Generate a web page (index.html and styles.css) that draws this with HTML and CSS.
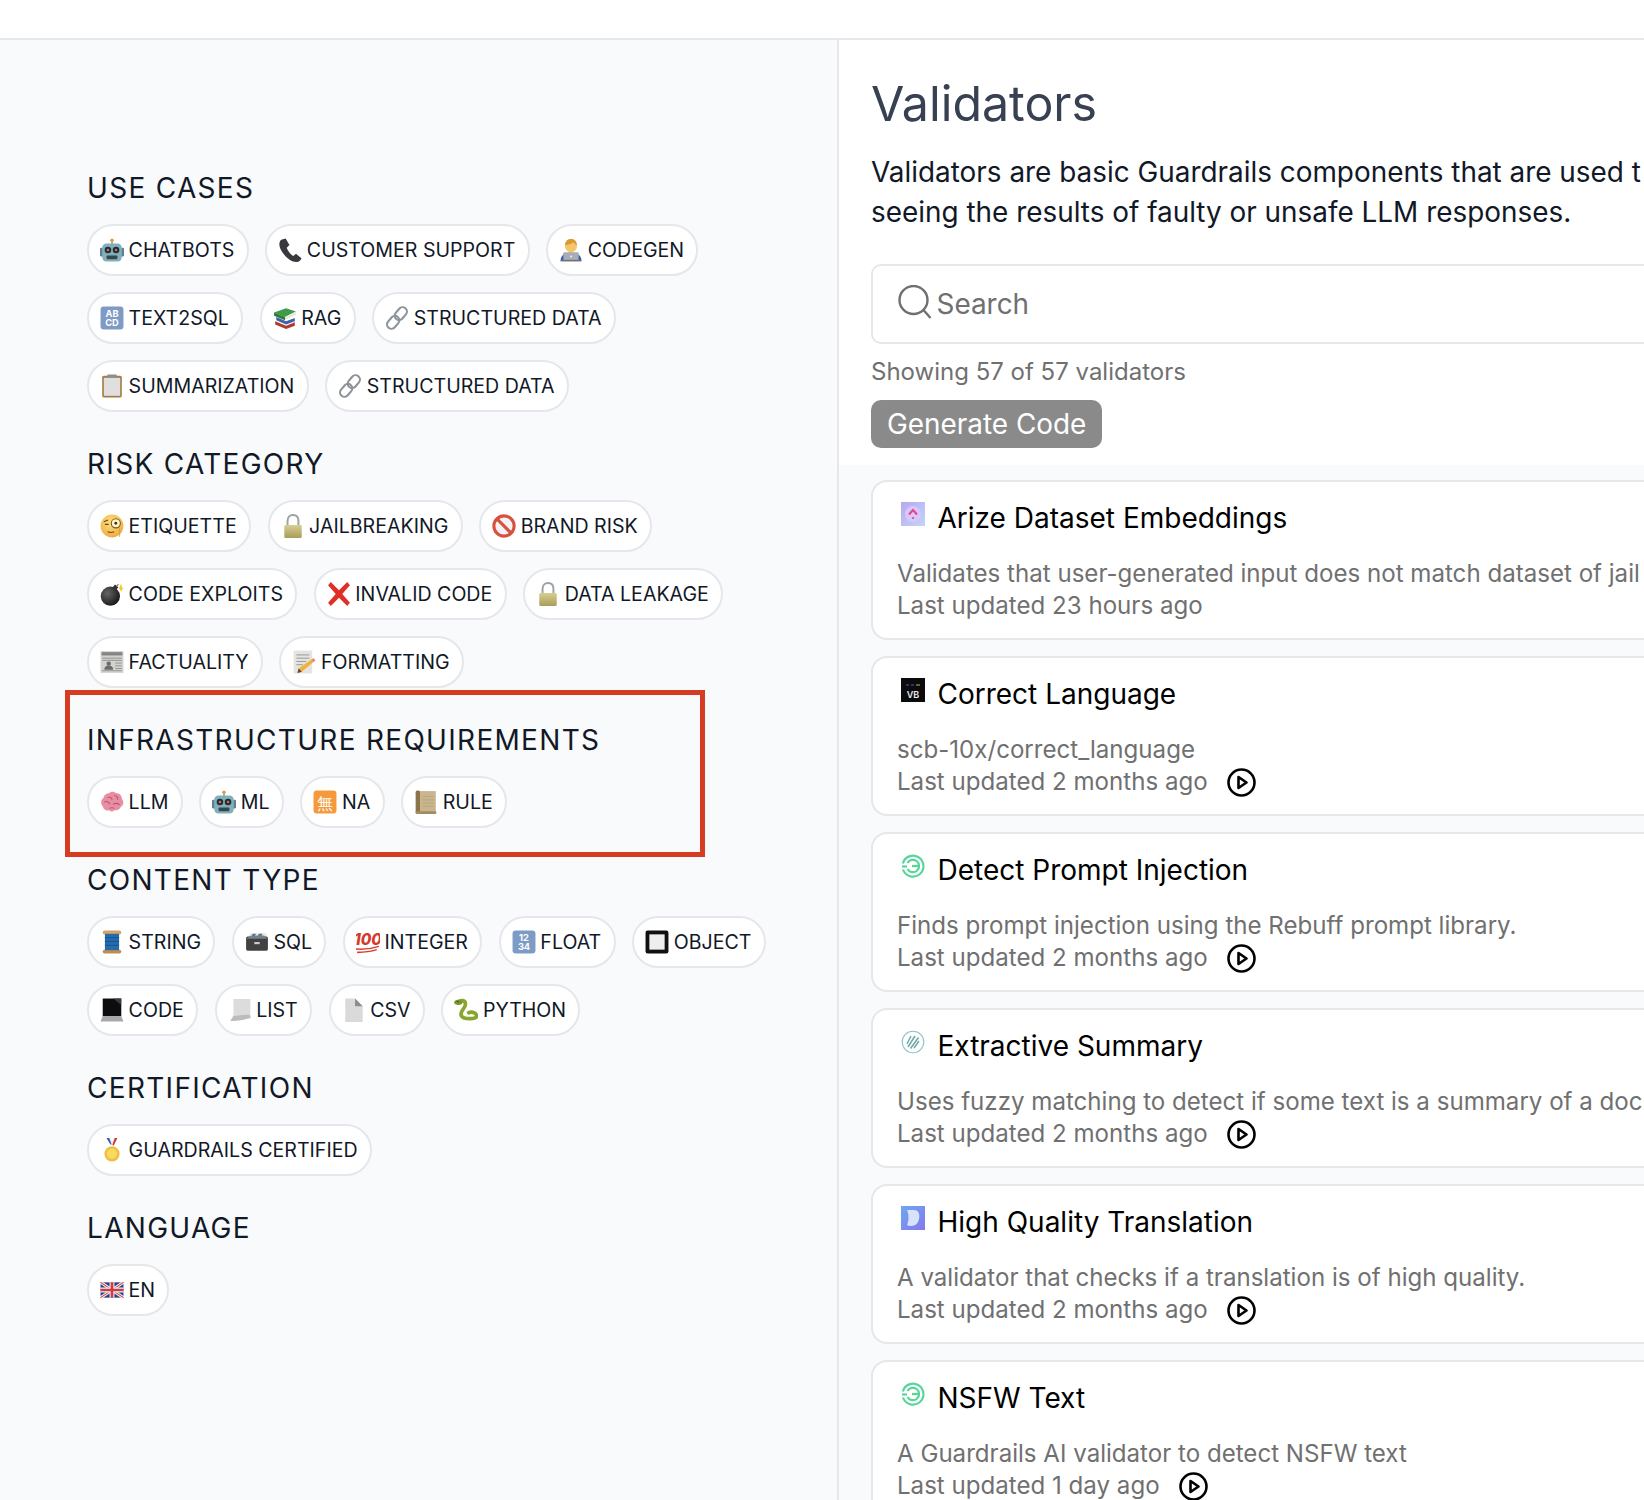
FILE: index.html
```html
<!DOCTYPE html>
<html lang="en">
<head>
<meta charset="utf-8">
<title>Validators</title>
<link rel="stylesheet" href="styles.css">
</head>
<body>
<svg class="sprite" aria-hidden="true">
<defs>
<linearGradient id="g-lock" x1="0" x2="0" y1="0" y2="1"><stop offset="0" stop-color="#d8cf93"/><stop offset="1" stop-color="#a89c58"/></linearGradient>
<linearGradient id="g-arize" x1="0" x2="1" y1="0" y2="1"><stop offset="0" stop-color="#b7a8f0"/><stop offset="1" stop-color="#c5d4fa"/></linearGradient>
<linearGradient id="g-trans" x1="0" x2="1" y1="0" y2="1"><stop offset="0" stop-color="#6fa8ee"/><stop offset="1" stop-color="#8578ee"/></linearGradient>
<radialGradient id="g-face" cx=".45" cy=".35" r=".75"><stop offset="0" stop-color="#ffe27a"/><stop offset="1" stop-color="#eda33c"/></radialGradient>
<radialGradient id="g-bomb" cx=".35" cy=".35" r=".75"><stop offset="0" stop-color="#666"/><stop offset="1" stop-color="#111"/></radialGradient>
<symbol id="e-robot" viewBox="0 0 22 22"><circle cx="11" cy="2" r="1.600" fill="#f0953a"/><rect x="10.300" y="3" width="1.400" height="3" fill="#8a9aa3"/><rect x="0" y="9" width="3" height="8" rx="1.200" fill="#5f7f8a"/><rect x="19" y="9" width="3" height="8" rx="1.200" fill="#5f7f8a"/><rect x="2" y="5" width="18" height="16.500" rx="4" fill="#7fb0bb"/><circle cx="7.300" cy="11" r="3" fill="#1f2c33"/><circle cx="14.700" cy="11" r="3" fill="#1f2c33"/><circle cx="7.300" cy="11" r="1.200" fill="#e8604c"/><circle cx="14.700" cy="11" r="1.200" fill="#e8604c"/><rect x="6" y="16" width="10" height="3.400" rx="1" fill="#34474f"/></symbol>
<symbol id="e-phone" viewBox="0 0 22 22"><path d="M3 1.500c-2.500 2-2.500 6.500 1 11.500s8 9 13 9c2.500 0 4-2 4.500-3.500l-5-4-2.500 2c-2-1-5-4.500-6-7.500l2.500-2.500L7 .5z" fill="#38393d"/></symbol>
<symbol id="e-tech" viewBox="0 0 22 22"><path d="M5.500 7c0-4 2.500-6 5.500-6s5.500 2 5.500 6c0 3.500-2.500 6-5.500 6s-5.500-2.500-5.500-6z" fill="#f5c56b"/><path d="M5.500 6.500C6 2.500 8.500 1 11 1s5 1.500 5.500 5.500c-2-.5-3-2-3.500-2.500-1 1.500-4.500 2.500-7.500 2.500z" fill="#d89a35"/><path d="M1.500 21c0-5 3-7.500 9.500-7.500s9.500 2.500 9.500 7.500z" fill="#3a55b8"/><rect x="4" y="13" width="14" height="8" rx="1" fill="#a7adb3"/><rect x="1.500" y="20" width="19" height="1.500" fill="#6d7378"/><circle cx="11" cy="17" r=".9" fill="#eef"/></symbol>
<symbol id="e-abcd" viewBox="0 0 22 22"><rect x="0.500" y="0.500" width="21" height="21" rx="3" fill="#7d9bc4"/><text x="11" y="10" class="sq">AB</text><text x="11" y="18.500" class="sq">CD</text></symbol>
<symbol id="e-books" viewBox="0 0 22 22"><path d="M1 6l11-4 9 3-10 5z" fill="#3f9a4a"/><path d="M1 6l10 4v3L1 9z" fill="#2f7a3a"/><path d="M11 10l10-5v3l-10 5z" fill="#e8ebd8"/><path d="M3 10l9 4 8-3v3l-8 3-9-4z" fill="#3d64a8"/><path d="M2 14l10 4 8-3v3l-8 3-10-4z" fill="#b2392f"/></symbol>
<symbol id="e-link" viewBox="0 0 22 22"><g fill="none" stroke="#8c939a" stroke-width="1.900"><rect x="10.500" y="0.500" width="8" height="13" rx="4" transform="rotate(40 14.500 7)"/><rect x="3.500" y="8.500" width="8" height="13" rx="4" transform="rotate(40 7.500 15)"/></g></symbol>
<symbol id="e-clip" viewBox="0 0 22 22"><rect x="2" y="1.500" width="18" height="20" rx="1.500" fill="#a87a45"/><rect x="3.500" y="3.500" width="15" height="16.500" fill="#dfdfdf"/><rect x="6.500" y=".5" width="9" height="3" rx="1" fill="#8c8f93"/></symbol>
<symbol id="e-face" viewBox="0 0 22 22"><circle cx="11" cy="11" r="10.500" fill="url(#g-face)"/><circle cx="14.500" cy="8.500" r="4.200" fill="#fff3c9" stroke="#7b5a20" stroke-width="1"/><circle cx="14.500" cy="8.500" r="1.300" fill="#4a3416"/><path d="M3.500 7l4-1.500M4.500 9.500h3.500" stroke="#6a4a1c" stroke-width="1" fill="none"/><path d="M7 16c2 1.500 4 1 6 .2" stroke="#6a4a1c" stroke-width="1" fill="none"/><path d="M18 12v9" stroke="#c7a23a" stroke-width=".7"/></symbol>
<symbol id="e-lock" viewBox="0 0 22 22"><path d="M6 11V6.500C6 3 8 1 11 1s5 2 5 5.500V11" fill="none" stroke="#9aa3a8" stroke-width="1.800"/><rect x="3" y="10" width="16" height="12" rx="1.200" fill="url(#g-lock)"/></symbol>
<symbol id="e-no" viewBox="0 0 22 22"><circle cx="11" cy="11" r="9.300" fill="#f3f3f3" stroke="#d8503f" stroke-width="2.800"/><path d="M4.500 4.500l13 13" stroke="#d8503f" stroke-width="2.800"/></symbol>
<symbol id="e-bomb" viewBox="0 0 22 22"><circle cx="9.500" cy="13" r="8.800" fill="url(#g-bomb)"/><rect x="12" y="3" width="4" height="4" transform="rotate(40 14 5)" fill="#333"/><path d="M15 4l2-2" stroke="#8a7a55" stroke-width="1"/><path d="M17.500 5.500l1.800-4 1 3.500 1.500 1-2 1 .5 2-2-1.500z" fill="#f5c53a"/></symbol>
<symbol id="e-x" viewBox="0 0 22 22"><path d="M1 3L3.500 0 11 7.500 18.500 0 21 3 14 11 21 19 18.500 22 11 14.500 3.500 22 1 19 8 11z" fill="#df2f26"/></symbol>
<symbol id="e-news" viewBox="0 0 22 22"><rect x="0.500" y="1" width="21" height="20" fill="#d2d3d1"/><rect x="1.500" y="2" width="19" height="3" fill="#83857f"/><path d="M2 7.500h18M2 9.500h18M14 12h6M14 14.500h6M14 17h6M2 19h18" stroke="#8d8f8a" stroke-width=".8"/><circle cx="8" cy="12.500" r="2" fill="#6a6b67"/><path d="M4 18c0-3 2-3.500 4-3.500s4 .5 4 3.500z" fill="#6a6b67"/></symbol>
<symbol id="e-memo" viewBox="0 0 22 22"><rect x="1.500" y="0.500" width="17" height="21" fill="#e4e4e0"/><path d="M4 4.500h12M4 7.500h12M4 10.500h9M4 13.500h6" stroke="#8f8f8a" stroke-width=".8"/><path d="M19.500 7.500l2 2L9 20l-4 1 1-4z" fill="#f0b23e"/><path d="M19.500 7.500l2 2-1.800 1.600-2-2z" fill="#e78a7e"/><path d="M6 17l-1 4 4-1z" fill="#5a4a35"/></symbol>
<symbol id="e-brain" viewBox="0 0 22 22"><path d="M8 3c2-2 5-2 7 0 3 0 5 2 5 5 2 2 2 6-1 7.500-1 2.500-3.500 3.500-6 3-1 1.500-3 1.500-4 .3-3 .5-6-1-6.500-4C.5 13 .5 9 3 7.500 3.500 5 5.500 3 8 3z" fill="#e78ea5"/><path d="M7 7c2-1 4 0 4 2M13 5c2 0 4 2 3 4M4 11c2-1 4 0 5 2M12 13c2-1 4-1 6 .5M9 17c1-1 3-1 4 0" fill="none" stroke="#b9566f" stroke-width="1"/></symbol>
<symbol id="e-na" viewBox="0 0 22 22"><rect x="0.500" y="0.500" width="21" height="21" rx="3" fill="#f49a3c"/><text x="11" y="17" class="cjk">無</text></symbol>
<symbol id="e-scroll" viewBox="0 0 22 22"><rect x="3" y="1" width="17" height="20" fill="#c9b58f"/><rect x="1.500" y="0.500" width="4" height="21.500" rx="1.500" fill="#8d7448"/><rect x="1.500" y="19.500" width="19" height="2.500" rx="1" fill="#a38c62"/><path d="M8 6h10M8 9h10M8 12h10M8 15h10" stroke="#b4a27d" stroke-width=".7"/></symbol>
<symbol id="e-spool" viewBox="0 0 22 22"><rect x="2.500" y="0.500" width="17" height="3.500" rx="1.700" fill="#d3a26b"/><rect x="2.500" y="18" width="17" height="3.500" rx="1.700" fill="#c18d55"/><rect x="4.500" y="3.500" width="13" height="15" fill="#266cad"/><path d="M4.500 7h13M4.500 10.500h13M4.500 14h13" stroke="#174f83" stroke-width=".8"/></symbol>
<symbol id="e-cabinet" viewBox="0 0 22 22"><path d="M3 6l2-3h14l1.500 3z" fill="#f0e6cc"/><path d="M6 6l1-2.500h3L9 6zM12 6l.5-2.500H16L15 6z" fill="#3f7ab8"/><rect x="1" y="6" width="20" height="13" rx="1.500" fill="#3f4143"/><path d="M1 8l5-3h11l4 3z" fill="#7b7f83"/><rect x="8.500" y="11" width="5" height="2" fill="#c8c9ca"/></symbol>
<symbol id="e-100" viewBox="0 0 22 22"><text x="11" y="14" class="hund">100</text><path d="M0 17.500c7 .5 15-.5 21-2.500M1 20.500c6 0 12-.5 18-2.500" fill="none" stroke="#d63a2f" stroke-width="1.400"/></symbol>
<symbol id="e-1234" viewBox="0 0 22 22"><rect x="0.500" y="0.500" width="21" height="21" rx="3" fill="#7d9bc4"/><text x="11" y="10" class="sq">12</text><text x="11" y="18.500" class="sq">34</text></symbol>
<symbol id="e-obj" viewBox="0 0 22 22"><rect x="0.500" y="0.500" width="21" height="21" rx="2" fill="#111"/><rect x="4" y="4" width="14" height="14" fill="#eee"/></symbol>
<symbol id="e-laptop" viewBox="0 0 22 22"><rect x="2.500" y="0.500" width="17" height="16" fill="#0d0d10"/><path d="M12 .5h7.500v6z" fill="#3a3a40"/><path d="M2.500 16.500h17l2 5H.5z" fill="#a6a8aa"/></symbol>
<symbol id="e-list" viewBox="0 0 22 22"><path d="M5 1h15.500v15.500c-3-.5-6 0-9 2l-8 2c1-2 1.500-4 1.500-6z" fill="#dcdcdc"/><path d="M2 21c4 .5 13-1 19-3l-1-2.500c-5-.5-11 1-15 1z" fill="#bcbcbc"/></symbol>
<symbol id="e-csv" viewBox="0 0 22 22"><path d="M3 .5h9l7 7V22H3z" fill="#dadada"/><path d="M12 .5l7 7h-7z" fill="#8c8c8c"/></symbol>
<symbol id="e-snake" viewBox="0 0 22 22"><path d="M3.500 3.500c3-2 7-1.500 7 2 0 4.500-5 6-4 10 .5 2.500 4 3.500 8 3.500s7-1 6-3.500-5-3-7-2" fill="none" stroke="#88a62e" stroke-width="3.400" stroke-linecap="round"/><ellipse cx="4" cy="4" rx="3.800" ry="2.500" fill="#78962a"/><circle cx="3.500" cy="3.300" r=".6" fill="#222"/></symbol>
<symbol id="e-medal" viewBox="0 0 22 22"><path d="M6 0h3l2.500 6h-2z" fill="#2c5bb0"/><path d="M16 0h-3l-2 6 1.500 1z" fill="#d4382e"/><path d="M8.500 0h1.500l1 4.500 1-4.500h1.500L11 7z" fill="#f1f1f1"/><circle cx="11" cy="14.500" r="7" fill="#ecc23e"/><circle cx="11" cy="14.500" r="4.600" fill="#f7d964"/></symbol>
<symbol id="e-flag" viewBox="0 0 22 22"><rect x="0.500" y="4" width="21" height="14" fill="#28407f"/><path d="M.5 4l21 14M21.500 4L.5 18" stroke="#f2f2f2" stroke-width="2.800"/><path d="M.5 4l21 14M21.500 4L.5 18" stroke="#cf3a45" stroke-width="1"/><path d="M11 4v14M.5 11h21" stroke="#f2f2f2" stroke-width="4.500"/><path d="M11 4v14M.5 11h21" stroke="#cf3a45" stroke-width="2.500"/></symbol>
<symbol id="l-arize" viewBox="0 0 24 24"><rect width="24" height="24" fill="url(#g-arize)"/><circle cx="12" cy="12" r="8" fill="#d5c9f7"/><path d="M8 12.500l4-4.500 4 4.500" fill="none" stroke="#ea3f95" stroke-width="2"/><circle cx="12" cy="16" r="1.100" fill="#ea3f95"/></symbol>
<symbol id="l-vb" viewBox="0 0 24 24"><rect width="24" height="24" fill="#0b0b0d"/><path d="M5 7h3M10 7h3" stroke="#6d4bd0" stroke-width="1"/><path d="M15 7h4" stroke="#9fc95a" stroke-width="1"/><text x="12" y="20" class="vb">VB</text></symbol>
<symbol id="l-g" viewBox="0 0 24 24"><g fill="none" stroke="#56d69a" stroke-width="2.200"><path d="M1.800 9.500A10.500 10.500 0 1 1 2 15.500"/><path d="M6.500 9A6.200 6.200 0 1 1 6.500 15"/><path d="M11 12h7.500"/><path d="M1 12.500h5"/></g></symbol>
<symbol id="l-sum" viewBox="0 0 24 24"><circle cx="12" cy="12" r="10.800" fill="#fff" stroke="#8fc4c2" stroke-width="1.100"/><path d="M6 14l4-8M7 17l7-11M9.500 18.500l8-11M13 18l5-7" stroke="#6aa9a7" stroke-width="1.500" fill="none"/></symbol>
<symbol id="l-trans" viewBox="0 0 24 24"><rect width="24" height="24" fill="url(#g-trans)"/><path d="M6 4h7c5 0 6 5 5 9-1 4-3 7-8 7-2 0-3-.5-4-1 2-4 2-11 0-15z" fill="#d9e2fb"/></symbol>
<symbol id="i-play" viewBox="0 0 29 29"><circle cx="14.500" cy="14.500" r="13" fill="none" stroke="#000" stroke-width="2.600"/><path d="M11.500 9l8 5.500-8 5.500z" fill="none" stroke="#000" stroke-width="2.600" stroke-linejoin="round"/></symbol>
</defs>
</svg>

<header class="topbar"></header>

<div class="layout">
  <aside class="sidebar">
    <section class="group">
      <h3 class="group-title">USE CASES</h3>
      <div class="tags">
        <span class="tag"><svg class="emo"><use href="#e-robot"/></svg>CHATBOTS</span>
        <span class="tag"><svg class="emo"><use href="#e-phone"/></svg>CUSTOMER SUPPORT</span>
        <span class="tag"><svg class="emo"><use href="#e-tech"/></svg>CODEGEN</span>
        <span class="tag"><svg class="emo"><use href="#e-abcd"/></svg>TEXT2SQL</span>
        <span class="tag"><svg class="emo"><use href="#e-books"/></svg>RAG</span>
        <span class="tag"><svg class="emo"><use href="#e-link"/></svg>STRUCTURED DATA</span>
        <span class="tag"><svg class="emo"><use href="#e-clip"/></svg>SUMMARIZATION</span>
        <span class="tag"><svg class="emo"><use href="#e-link"/></svg>STRUCTURED DATA</span>
      </div>
    </section>
    <section class="group">
      <h3 class="group-title">RISK CATEGORY</h3>
      <div class="tags">
        <span class="tag"><svg class="emo"><use href="#e-face"/></svg>ETIQUETTE</span>
        <span class="tag"><svg class="emo"><use href="#e-lock"/></svg>JAILBREAKING</span>
        <span class="tag"><svg class="emo"><use href="#e-no"/></svg>BRAND RISK</span>
        <span class="tag"><svg class="emo"><use href="#e-bomb"/></svg>CODE EXPLOITS</span>
        <span class="tag"><svg class="emo"><use href="#e-x"/></svg>INVALID CODE</span>
        <span class="tag"><svg class="emo"><use href="#e-lock"/></svg>DATA LEAKAGE</span>
        <span class="tag"><svg class="emo"><use href="#e-news"/></svg>FACTUALITY</span>
        <span class="tag"><svg class="emo"><use href="#e-memo"/></svg>FORMATTING</span>
      </div>
    </section>
    <section class="group group-marked">
      <h3 class="group-title">INFRASTRUCTURE REQUIREMENTS</h3>
      <div class="tags">
        <span class="tag"><svg class="emo"><use href="#e-brain"/></svg>LLM</span>
        <span class="tag"><svg class="emo"><use href="#e-robot"/></svg>ML</span>
        <span class="tag"><svg class="emo"><use href="#e-na"/></svg>NA</span>
        <span class="tag"><svg class="emo"><use href="#e-scroll"/></svg>RULE</span>
      </div>
      <div class="marker"></div>
    </section>
    <section class="group">
      <h3 class="group-title">CONTENT TYPE</h3>
      <div class="tags">
        <span class="tag"><svg class="emo"><use href="#e-spool"/></svg>STRING</span>
        <span class="tag"><svg class="emo"><use href="#e-cabinet"/></svg>SQL</span>
        <span class="tag"><svg class="emo"><use href="#e-100"/></svg>INTEGER</span>
        <span class="tag"><svg class="emo"><use href="#e-1234"/></svg>FLOAT</span>
        <span class="tag"><svg class="emo"><use href="#e-obj"/></svg>OBJECT</span>
        <span class="tag"><svg class="emo"><use href="#e-laptop"/></svg>CODE</span>
        <span class="tag"><svg class="emo"><use href="#e-list"/></svg>LIST</span>
        <span class="tag"><svg class="emo"><use href="#e-csv"/></svg>CSV</span>
        <span class="tag"><svg class="emo"><use href="#e-snake"/></svg>PYTHON</span>
      </div>
    </section>
    <section class="group">
      <h3 class="group-title">CERTIFICATION</h3>
      <div class="tags">
        <span class="tag"><svg class="emo"><use href="#e-medal"/></svg>GUARDRAILS CERTIFIED</span>
      </div>
    </section>
    <section class="group">
      <h3 class="group-title">LANGUAGE</h3>
      <div class="tags">
        <span class="tag"><svg class="emo"><use href="#e-flag"/></svg>EN</span>
      </div>
    </section>
  </aside>

  <main class="main">
    <div class="intro">
      <h1 class="page-title">Validators</h1>
      <p class="lede">Validators are basic Guardrails components that are used t<br>seeing the results of faulty or unsafe LLM responses.</p>
      <div class="search">
        <svg class="search-icon" viewBox="0 0 34 34"><circle cx="15.500" cy="15" r="14" fill="none" stroke="#707070" stroke-width="2.400"/><path d="M25.500 25l7 8" stroke="#707070" stroke-width="2.400"/></svg>
        <span class="search-text">Search</span>
      </div>
      <p class="count">Showing 57 of 57 validators</p>
      <button class="generate">Generate Code</button>
    </div>
    <div class="cards">
      <article class="card">
        <div class="card-head"><svg class="logo"><use href="#l-arize"/></svg><h2 class="card-title">Arize Dataset Embeddings</h2></div>
        <p class="card-text">Validates that user-generated input does not match dataset of jail</p>
        <p class="card-meta">Last updated 23 hours ago</p>
      </article>
      <article class="card">
        <div class="card-head"><svg class="logo"><use href="#l-vb"/></svg><h2 class="card-title">Correct Language</h2></div>
        <p class="card-text">scb-10x/correct_language</p>
        <p class="card-meta">Last updated 2 months ago<svg class="play"><use href="#i-play"/></svg></p>
      </article>
      <article class="card">
        <div class="card-head"><svg class="logo"><use href="#l-g"/></svg><h2 class="card-title">Detect Prompt Injection</h2></div>
        <p class="card-text">Finds prompt injection using the Rebuff prompt library.</p>
        <p class="card-meta">Last updated 2 months ago<svg class="play"><use href="#i-play"/></svg></p>
      </article>
      <article class="card">
        <div class="card-head"><svg class="logo"><use href="#l-sum"/></svg><h2 class="card-title">Extractive Summary</h2></div>
        <p class="card-text">Uses fuzzy matching to detect if some text is a summary of a docu</p>
        <p class="card-meta">Last updated 2 months ago<svg class="play"><use href="#i-play"/></svg></p>
      </article>
      <article class="card">
        <div class="card-head"><svg class="logo"><use href="#l-trans"/></svg><h2 class="card-title">High Quality Translation</h2></div>
        <p class="card-text">A validator that checks if a translation is of high quality.</p>
        <p class="card-meta">Last updated 2 months ago<svg class="play"><use href="#i-play"/></svg></p>
      </article>
      <article class="card">
        <div class="card-head"><svg class="logo"><use href="#l-g"/></svg><h2 class="card-title">NSFW Text</h2></div>
        <p class="card-text">A Guardrails AI validator to detect NSFW text</p>
        <p class="card-meta">Last updated 1 day ago<svg class="play"><use href="#i-play"/></svg></p>
      </article>
    </div>
  </main>
</div>
</body>
</html>
```
FILE: styles.css
```css
* { box-sizing: border-box; }
html, body { margin: 0; padding: 0; }
body {
  width: 1644px;
  height: 1500px;
  overflow: hidden;
  background: #fff;
  font-family: Inter, "Noto Sans", sans-serif;
  color: #111827;
}
.sprite { width: 0; height: 0; position: absolute; }
.sprite text { font-family: Inter, sans-serif; }
.sq { font-size: 8.500px; font-weight: 700; fill: #fff; text-anchor: middle; }
.cjk { font-family: "Noto Sans CJK JP", sans-serif; font-size: 15px; fill: #fff; text-anchor: middle; }
.hund { font-size: 14px; font-weight: 800; font-style: italic; fill: #d63a2f; text-anchor: middle; }
.vb { font-size: 9px; font-weight: 600; fill: #ececec; text-anchor: middle; }

.topbar { height: 40px; border-bottom: 2px solid #e5e7eb; background: #fff; }
.layout { display: flex; height: 1460px; }

.sidebar {
  width: 839px;
  flex: none;
  padding: 130px 40px 0 87px;
  background: #f9fafb;
  border-right: 2px solid #e5e7eb;
}
.group { margin-bottom: 34px; }
.group-marked { position: relative; }
.marker {
  position: absolute;
  left: -22.500px;
  top: -32px;
  width: 640px;
  height: 167px;
  border: 5px solid #d63c22;
  pointer-events: none;
}
.group-title {
  margin: 0 0 18px;
  font-size: 28px;
  line-height: 36px;
  font-weight: 400;
  letter-spacing: 1.300px;
  color: #111827;
}
.tags { display: flex; flex-wrap: wrap; gap: 16px 16.500px; }
.tag {
  display: inline-flex;
  align-items: center;
  height: 52px;
  padding: 0 12.300px 0 12px;
  font-size: 19.600px;
  line-height: 28px;
  color: #111827;
  background: #fff;
  border: 2px solid #e5e7eb;
  border-radius: 26px;
  white-space: nowrap;
}
.emo { width: 24px; height: 24px; margin: 0 4.600px 0 -1px; flex: none; }

.main { flex: 1; min-width: 0; overflow: hidden; background: #f9fafb; }
.intro {
  height: 425px;
  padding: 34px 0 0 32px;
  background: #fff;
}
.page-title {
  margin: 0;
  font-size: 48.300px;
  line-height: 60px;
  font-weight: 400;
  color: #374151;
}
.lede {
  margin: 17.700px 0 0;
  font-size: 27.900px;
  line-height: 40px;
  color: #111827;
  white-space: nowrap;
}
.search {
  display: flex;
  align-items: center;
  width: 1600px;
  height: 80px;
  margin-top: 32.300px;
  padding-left: 24.500px;
  border: 2px solid #e5e7eb;
  border-radius: 10px;
}
.search-icon { width: 34px; height: 34px; flex: none; margin-right: 5px; margin-top: -4px; }
.search-text { font-size: 27.900px; color: #707070; margin-top: 1px; }
.count {
  margin: 11.700px 0 0;
  font-size: 24px;
  line-height: 32px;
  color: #707070;
}
.generate {
  display: block;
  height: 48px;
  margin-top: 12.300px;
  padding: 0 16px;
  font: 400 27.900px/48px Inter, sans-serif;
  color: #fff;
  background: #8a8a8a;
  border: 0;
  border-radius: 10px;
}
.cards { padding: 15px 0 0 32px; display: flex; flex-direction: column; gap: 16px; }
.card {
  width: 1600px;
  height: 160px;
  flex: none;
  padding: 16px 24px 0;
  background: #fff;
  border: 2px solid #e5e7eb;
  border-radius: 16px;
}
.card-head { display: flex; align-items: flex-start; height: 40px; }
.logo { width: 24px; height: 24px; margin: 4px 12.700px 0 3.800px; flex: none; }
.card-title { margin: 0; font-size: 28px; line-height: 40px; font-weight: 400; color: #000; }
.card-text, .card-meta {
  display: flex;
  align-items: center;
  height: 32px;
  margin: 0;
  font-size: 24.100px;
  line-height: 32px;
  color: #707070;
  white-space: nowrap;
}
.card-text { margin-top: 20px; }
.play { width: 29px; height: 29px; margin-left: 19px; flex: none; }
```
